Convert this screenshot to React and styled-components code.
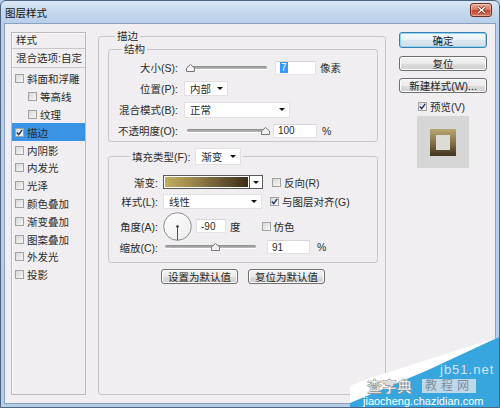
import React from "react";
import styled, { createGlobalStyle } from "styled-components";

const GlobalStyle = createGlobalStyle`
  html, body { margin: 0; padding: 0; background: #b9d0ea; }
  body {
    font-family: "Liberation Sans", "Noto Sans CJK SC", sans-serif;
    font-size: 10.5px;
    color: #2b2b2b;
  }
`;

const Window = styled.div`
  position: relative;
  width: 500px;
  height: 408px;
  box-sizing: border-box;
  border: 1px solid #4d6582;
  border-radius: 6px 6px 0 0;
  background: linear-gradient(180deg, #dbe7f5 0, #c6d9ee 10px, #b9cfe9 22px, #b6cde8 100%);
  padding: 0 3px 3px;
  display: flex;
  flex-direction: column;
  overflow: hidden;
`;

const TitleBar = styled.div`
  height: 22px;
  display: flex;
  align-items: center;
  justify-content: space-between;
  padding: 0 4px 0 1px;
`;

const Title = styled.span`
  font-size: 10.5px;
  color: #111;
`;

const CloseBtn = styled.div`
  align-self: flex-start;
  margin-top: 2px;
  width: 22px;
  height: 14px;
  box-sizing: border-box;
  border: 1px solid #6b2c22;
  border-radius: 3px;
  background: linear-gradient(180deg, #eaa996 0, #d87860 48%, #c5482f 52%, #d5765c 100%);
  box-shadow: inset 0 0 0 1px rgba(255, 255, 255, 0.35);
  display: flex;
  align-items: center;
  justify-content: center;
`;

const Client = styled.div`
  flex: 1;
  display: flex;
  align-items: flex-start;
  background: #f0eef0;
  border: 1px solid #8aa2c0;
  padding: 6px 0 0 6px;
`;

/* ---------- left style list ---------- */
const StyleList = styled.div`
  margin-top: 2px;
  width: 75px;
  height: 363px;
  box-sizing: border-box;
  border: 1px solid #bcb9bc;
  box-shadow: inset 1px 1px 0 #fbfafb;
  flex-shrink: 0;
`;

const ListHead = styled.div`
  height: ${(p) => p.$h}px;
  line-height: ${(p) => p.$h}px;
  border-bottom: 1px solid #c9c6c9;
  padding-left: 4px;
  white-space: nowrap;
`;

const ListBody = styled.div`
  padding-top: 2px;
`;

const ListItem = styled.div`
  height: 17.8px;
  display: flex;
  align-items: center;
  gap: 3px;
  padding-left: ${(p) => (p.$sub ? 16 : 3)}px;
  background: ${(p) => (p.$sel ? "#3b93e6" : "transparent")};
  white-space: nowrap;
`;

/* ---------- group boxes ---------- */
const Group = styled.fieldset`
  margin: ${(p) => p.$m || 0};
  min-width: 0;
  width: ${(p) => p.$w}px;
  height: ${(p) => (p.$h ? `${p.$h}px` : "auto")};
  box-sizing: border-box;
  border: 1px solid #c9c6c9;
  border-radius: 3px;
  padding: ${(p) => p.$pad || 0};
  flex-shrink: 0;
`;

const Legend = styled.legend`
  line-height: 13px;
  padding: 0 2px;
  margin-left: ${(p) => p.$ml}px;
`;

const LegendRow = styled.legend`
  display: flex;
  align-items: center;
  padding: 0 2px;
  margin-left: ${(p) => p.$ml}px;
  height: 17px;
`;

const Row = styled.div`
  display: flex;
  align-items: center;
  height: ${(p) => p.$h}px;
  margin-top: ${(p) => p.$mt || 0}px;
`;

const Label = styled.span`
  width: ${(p) => p.$w}px;
  text-align: right;
  flex-shrink: 0;
  white-space: nowrap;
`;

const Text = styled.span`
  margin-left: ${(p) => p.$ml || 0}px;
  white-space: nowrap;
`;

/* ---------- controls ---------- */
const SliderBox = styled.div`
  position: relative;
  width: ${(p) => p.$w}px;
  height: 12px;
  margin-left: ${(p) => p.$ml}px;
  flex-shrink: 0;
`;

const Track = styled.div`
  position: absolute;
  left: 3px;
  right: 3px;
  top: 4px;
  height: 3px;
  border-radius: 2px;
  background: linear-gradient(180deg, #8a8a8a, #bcbcbc);
  box-shadow: 0 1px 0 #ffffff;
`;

const Thumb = styled.svg`
  position: absolute;
  top: 2px;
  left: calc(3px + (100% - 6px) * ${(p) => p.$pos} - 4.5px);
`;

const Field = styled.div`
  width: ${(p) => p.$w}px;
  height: 14px;
  margin-left: ${(p) => p.$ml}px;
  box-sizing: border-box;
  background: #fff;
  border: 1px solid #e4e2e4;
  border-top-color: #d6d4d6;
  padding-left: 4px;
  display: flex;
  align-items: center;
  font-size: 10px;
  flex-shrink: 0;
`;

const Selected = styled.span`
  background: #3399ff;
  color: #fff;
  padding: 0 1px;
  line-height: 11px;
`;

const Select = styled.div`
  width: ${(p) => p.$w}px;
  height: ${(p) => p.$h || 15}px;
  margin-left: ${(p) => p.$ml || 0}px;
  box-sizing: border-box;
  background: #fff;
  border: 1px solid #e2e0e2;
  display: flex;
  align-items: center;
  justify-content: space-between;
  padding: 0 4px 0 5px;
  flex-shrink: 0;
`;

const Arrow = styled.span`
  width: 0;
  height: 0;
  border-left: 3px solid transparent;
  border-right: 3px solid transparent;
  border-top: 3px solid #111;
`;

const Box = styled.span`
  width: 9px;
  height: 9px;
  box-sizing: border-box;
  border: 1px solid #a2a2a2;
  background: linear-gradient(135deg, #d8d8d8, #f6f6f6);
  display: inline-flex;
  align-items: center;
  justify-content: center;
  flex-shrink: 0;
`;

const Check = styled.label`
  display: flex;
  align-items: center;
  gap: 3px;
  margin-left: ${(p) => p.$ml || 0}px;
  white-space: nowrap;
`;

const GradPicker = styled.div`
  display: flex;
  height: 14px;
  margin-left: ${(p) => p.$ml}px;
  border: 1px solid #5a5a5a;
  box-sizing: border-box;
  flex-shrink: 0;
`;

const GradSwatch = styled.div`
  width: 85px;
  background: linear-gradient(90deg, #c6ae5e 0%, #a08b4e 30%, #6c5b36 65%, #3b2a15 100%);
  box-shadow: inset 0 0 0 1px #fff;
`;

const GradBtn = styled.div`
  width: 12px;
  background: #fff;
  border-left: 1px solid #5a5a5a;
  display: flex;
  align-items: center;
  justify-content: center;
`;

const Dial = styled.svg`
  margin-left: ${(p) => p.$ml}px;
  flex-shrink: 0;
`;

const BtnRow = styled.div`
  display: flex;
  justify-content: center;
  gap: 10px;
  margin-top: 6px;
`;

const Btn = styled.div`
  width: ${(p) => (p.$w ? `${p.$w}px` : "auto")};
  height: ${(p) => p.$h || 15}px;
  margin-top: ${(p) => p.$mt || 0}px;
  box-sizing: border-box;
  border: 1px solid ${(p) => (p.$def ? "#3c7fb1" : "#707070")};
  border-radius: 3px;
  background: ${(p) =>
    p.$def
      ? "linear-gradient(180deg, #f4f9fc 0, #eaf2f7 50%, #dbe7ef 51%, #d0dfe9 100%)"
      : "linear-gradient(180deg, #f3f3f3 0, #ebebeb 50%, #dddddd 51%, #cfcfcf 100%)"};
  box-shadow: inset 0 0 0 1px ${(p) => (p.$def ? "#8fd6f4" : "#fcfcfc")};
  display: flex;
  align-items: center;
  justify-content: center;
  white-space: nowrap;
  font-size: 10.5px;
  color: #1e1e1e;
`;

/* ---------- right column ---------- */
const Side = styled.div`
  margin: 2px 0 0 13px;
  width: 88px;
  display: flex;
  flex-direction: column;
  flex-shrink: 0;
`;

const PreviewCheck = styled(Check)`
  height: 12px;
  margin: 7px 0 0 19px;
`;

const Preview = styled.div`
  width: 52px;
  height: 52px;
  margin: 4px 0 0 18px;
  background: #d6d6d6;
  display: flex;
  align-items: center;
  justify-content: center;
`;

const PreviewStroke = styled.div`
  width: 26px;
  height: 27px;
  box-sizing: border-box;
  padding: 6px;
  background: linear-gradient(180deg, #b9a76f 0%, #7f6d44 55%, #3f321c 100%);
`;

const PreviewFill = styled.div`
  width: 100%;
  height: 100%;
  background: #dcdbd6;
`;

/* ---------- watermark ---------- */
const Watermark = styled.div`
  position: absolute;
  right: -1px;
  bottom: -1px;
  width: 150px;
  height: 78px;
  pointer-events: none;
  font-family: "Liberation Sans", "Noto Sans CJK SC", sans-serif;
`;

const WmShape = styled.svg`
  position: absolute;
  left: 0;
  top: 0;
`;

const WmText = styled.span`
  position: absolute;
  left: ${(p) => p.$x}px;
  top: ${(p) => p.$y}px;
  font-size: ${(p) => p.$size}px;
  color: ${(p) => p.$color};
  letter-spacing: ${(p) => p.$ls || 0}px;
  white-space: nowrap;
  line-height: 1;
`;

const WmBadge = styled(WmText)`
  background: rgba(214, 224, 233, 0.85);
  padding: 1px 3px;
`;

const WmOutline = styled(WmText)`
  font-weight: bold;
  -webkit-text-stroke: 0.6px #8c8c8c;
`;

/* ---------- pieces ---------- */
const Tick = () => (
  <svg width="7" height="7" viewBox="0 0 7 7">
    <path d="M0.8 3.6 L2.7 5.6 L6.2 0.9" fill="none" stroke="#23355f" strokeWidth="1.4" />
  </svg>
);

const CheckBox = ({ on }) => <Box>{on && <Tick />}</Box>;

const Slider = ({ w, ml, pos }) => (
  <SliderBox $w={w} $ml={ml}>
    <Track />
    <Thumb $pos={pos} width="9" height="8" viewBox="0 0 9 8">
      <path d="M4.5 0.5 L8.5 4 L8.5 7.5 L0.5 7.5 L0.5 4 Z" fill="#f2f2f2" stroke="#777" />
    </Thumb>
  </SliderBox>
);

const items = [
  { t: "斜面和浮雕" },
  { t: "等高线", sub: true },
  { t: "纹理", sub: true },
  { t: "描边", on: true, sel: true },
  { t: "内阴影" },
  { t: "内发光" },
  { t: "光泽" },
  { t: "颜色叠加" },
  { t: "渐变叠加" },
  { t: "图案叠加" },
  { t: "外发光" },
  { t: "投影" },
];

export default function App() {
  return (
    <>
      <GlobalStyle />
      <Window>
        <TitleBar>
          <Title>图层样式</Title>
          <CloseBtn>
            <svg width="9" height="8" viewBox="0 0 9 8">
              <path d="M1 1 L8 7 M8 1 L1 7" stroke="#5a1a10" strokeWidth="2.6" />
              <path d="M1 1 L8 7 M8 1 L1 7" stroke="#fff" strokeWidth="1.5" />
            </svg>
          </CloseBtn>
        </TitleBar>

        <Client>
          <StyleList>
            <ListHead $h={15}>样式</ListHead>
            <ListHead $h={18}>混合选项:自定</ListHead>
            <ListBody>
              {items.map((it) => (
                <ListItem key={it.t} $sub={it.sub} $sel={it.sel}>
                  <CheckBox on={it.on} />
                  <span>{it.t}</span>
                </ListItem>
              ))}
            </ListBody>
          </StyleList>

          <Group $w={288} $h={365} $m="0 0 0 12px" $pad="0 7px 0 9px">
            <Legend $ml={7}>描边</Legend>

            <Group $w={270} $pad="1px 0 0 0">
              <Legend $ml={13}>结构</Legend>
              <Row $h={21}>
                <Label $w={69}>大小(S):</Label>
                <Slider w={86} ml={6} pos={0.04} />
                <Field $w={41} $ml={5}>
                  <Selected>7</Selected>
                </Field>
                <Text $ml={4}>像素</Text>
              </Row>
              <Row $h={21}>
                <Label $w={69}>位置(P):</Label>
                <Select $w={44} $ml={6}>
                  <span>内部</span>
                  <Arrow />
                </Select>
              </Row>
              <Row $h={21}>
                <Label $w={69}>混合模式(B):</Label>
                <Select $w={106} $h={16} $ml={6}>
                  <span>正常</span>
                  <Arrow />
                </Select>
              </Row>
              <Row $h={21}>
                <Label $w={69}>不透明度(O):</Label>
                <Slider w={86} ml={6} pos={0.98} />
                <Field $w={44} $ml={3}>100</Field>
                <Text $ml={5}>%</Text>
              </Row>
            </Group>

            <Group $w={270} $m="6px 0 0 0" $pad="0 0 9px 0">
              <LegendRow $ml={21}>
                <span>填充类型(F):</span>
                <Select $w={46} $h={17} $ml={5}>
                  <span>渐变</span>
                  <Arrow />
                </Select>
              </LegendRow>
              <Row $h={20} $mt={7}>
                <Label $w={49}>渐变:</Label>
                <GradPicker $ml={5}>
                  <GradSwatch />
                  <GradBtn>
                    <Arrow />
                  </GradBtn>
                </GradPicker>
                <Check $ml={9}>
                  <CheckBox />
                  <span>反向(R)</span>
                </Check>
              </Row>
              <Row $h={19}>
                <Label $w={49}>样式(L):</Label>
                <Select $w={99} $ml={5}>
                  <span>线性</span>
                  <Arrow />
                </Select>
                <Check $ml={8}>
                  <CheckBox on />
                  <span>与图层对齐(G)</span>
                </Check>
              </Row>
              <Row $h={30}>
                <Label $w={49}>角度(A):</Label>
                <Dial $ml={5} width="29" height="29" viewBox="0 0 29 29">
                  <defs>
                    <linearGradient id="dialFill" x1="0" y1="0" x2="1" y2="1">
                      <stop offset="0" stopColor="#ffffff" />
                      <stop offset="1" stopColor="#ececec" />
                    </linearGradient>
                  </defs>
                  <circle cx="14.5" cy="14.5" r="13.8" fill="url(#dialFill)" stroke="#8c8c8c" strokeWidth="1" />
                  <line x1="14.5" y1="14.5" x2="14.5" y2="28.3" stroke="#555" strokeWidth="1" />
                  <circle cx="14.5" cy="14.5" r="1.3" fill="#333" />
                </Dial>
                <Field $w={30} $ml={4}>-90</Field>
                <Text $ml={4}>度</Text>
                <Check $ml={21}>
                  <CheckBox />
                  <span>仿色</span>
                </Check>
              </Row>
              <Row $h={12}>
                <Label $w={49}>缩放(C):</Label>
                <Slider w={97} ml={4} pos={0.55} />
                <Field $w={43} $ml={8}>91</Field>
                <Text $ml={7}>%</Text>
              </Row>
            </Group>

            <BtnRow>
              <Btn $w={77}>设置为默认值</Btn>
              <Btn $w={77}>复位为默认值</Btn>
            </BtnRow>
          </Group>

          <Side>
            <Btn $def $h={16}>确定</Btn>
            <Btn $mt={8}>复位</Btn>
            <Btn $mt={7}>新建样式(W)...</Btn>
            <PreviewCheck>
              <CheckBox on />
              <span>预览(V)</span>
            </PreviewCheck>
            <Preview>
              <PreviewStroke>
                <PreviewFill />
              </PreviewStroke>
            </Preview>
          </Side>
        </Client>

        <Watermark>
          <WmShape width="150" height="78" viewBox="0 0 150 78">
            <polygon points="14,50 149,7 78,40 0,73 0,56" fill="#ffffff" />
            <polygon points="149,7 150,6 150,78 0,78 0,73 78,40" fill="#38a6de" />
          </WmShape>
          <WmText $x={90} $y={33} $size={13} $color="#d3e3ee" $ls={1}>jb51.net</WmText>
          <WmBadge $x={72} $y={49} $size={12} $color="#7d8ea2" $ls={4}>教程网</WmBadge>
          <WmOutline $x={17} $y={49} $size={15} $color="#ffffff">查字典</WmOutline>
          <WmText $x={13} $y={66} $size={11} $color="#ffffff">jiaocheng.chazidian.com</WmText>
        </Watermark>
      </Window>
    </>
  );
}
